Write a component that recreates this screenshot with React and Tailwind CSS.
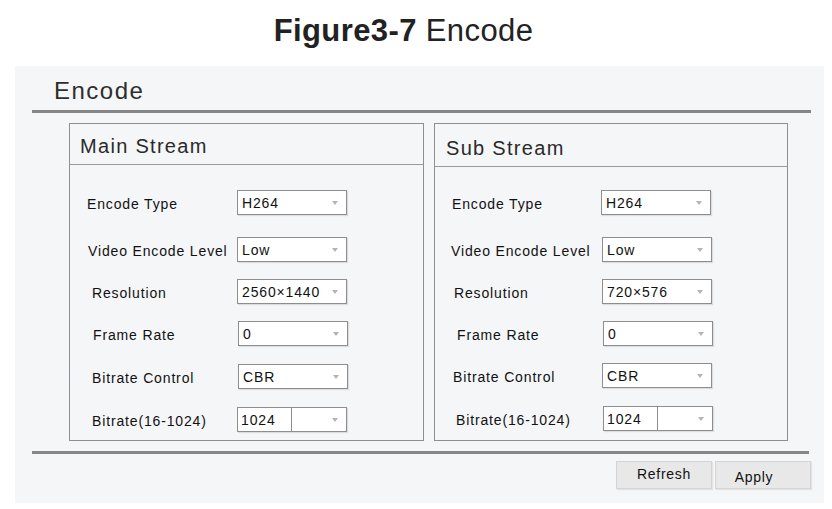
const mainRows = [
  { label: 'Encode Type', value: 'H264', mt: 'mt-[25px]', lbl: 'pl-[17px] w-[167px]' },
  { label: 'Video Encode Level', value: 'Low', mt: 'mt-[22px]', lbl: 'pl-[18px] w-[167px]' },
  { label: 'Resolution', value: '2560×1440', mt: 'mt-[17px]', lbl: 'pl-[22px] w-[167px]' },
  { label: 'Frame Rate', value: '0', mt: 'mt-[17px]', lbl: 'pl-[23px] w-[168px]' },
  { label: 'Bitrate Control', value: 'CBR', mt: 'mt-[18px]', lbl: 'pl-[22px] w-[168px]' },
  { label: 'Bitrate(16-1024)', value: '1024', mt: 'mt-[18px]', lbl: 'pl-[22px] w-[167px]', split: true },
]

const subRows = [
  { label: 'Encode Type', value: 'H264', mt: 'mt-[23px]', lbl: 'pl-[17px] w-[166px]' },
  { label: 'Video Encode Level', value: 'Low', mt: 'mt-[22px]', lbl: 'pl-[16px] w-[167px]' },
  { label: 'Resolution', value: '720×576', mt: 'mt-[17px]', lbl: 'pl-[19px] w-[167px]' },
  { label: 'Frame Rate', value: '0', mt: 'mt-[17px]', lbl: 'pl-[22px] w-[168px]' },
  { label: 'Bitrate Control', value: 'CBR', mt: 'mt-[17px]', lbl: 'pl-[18px] w-[167px]' },
  { label: 'Bitrate(16-1024)', value: '1024', mt: 'mt-[18px]', lbl: 'pl-[21px] w-[168px]', split: true },
]

function Arrow() {
  return (
    <svg width="6" height="4" viewBox="0 0 6 4" className="shrink-0">
      <polygon points="0,0 6,0 3,4" fill="#b4b4b4" />
    </svg>
  )
}

function Select({ value, split }) {
  if (split) {
    return (
      <div className="flex h-[25px] w-[110px] bg-white border border-[#8e8e8e] shadow-[1px_1px_1px_rgba(0,0,0,0.1)]">
        <div className="w-[54px] border-r border-[#8e8e8e] pl-[3px] flex items-center">{value}</div>
        <div className="flex-1 flex items-center justify-end pr-[8px]">
          <Arrow />
        </div>
      </div>
    )
  }
  return (
    <div className="flex items-center justify-between h-[25px] w-[110px] bg-white border border-[#8e8e8e] pl-[4px] pr-[8px] shadow-[1px_1px_1px_rgba(0,0,0,0.1)]">
      <span>{value}</span>
      <Arrow />
    </div>
  )
}

function StreamBox({ title, rows, header, titlePad }) {
  return (
    <div className="h-[318px] border border-[#8f8f8f] flex flex-col">
      <div className={`${header} ${titlePad} border-b border-[#9a9a9a] text-[20px] leading-[24px] tracking-[1.3px] text-[#2a2a2a]`}>
        {title}
      </div>
      <div className="flex flex-col text-[14px] leading-[18px] tracking-[0.85px] text-[#111]">
        {rows.map((r) => (
          <div key={r.label} className={`flex items-center ${r.mt}`}>
            <span className={`${r.lbl} shrink-0 translate-y-[1px]`}>{r.label}</span>
            <Select value={r.value} split={r.split} />
          </div>
        ))}
      </div>
    </div>
  )
}

export default function App() {
  return (
    <div className="w-[832px] h-[509px] bg-white overflow-hidden" style={{ fontFamily: '"Liberation Sans", Arial, sans-serif' }}>
      <div className="h-[66px] flex justify-center pr-[25px] pt-[13px]">
        <h1 className="text-[31px] leading-[35px] tracking-[0.4px] text-[#222]">
          <span className="font-bold">Figure3-7</span> Encode
        </h1>
      </div>

      <div className="ml-[15px] w-[809px] h-[437px] bg-[#f5f6f8] pt-[11px]">
        <div className="pl-[39px] text-[24px] leading-[28px] tracking-[1.5px] text-[#2e2e2e]">Encode</div>
        <div className="ml-[17px] mt-[5px] w-[779px] h-[3px] bg-[#868686]" />

        <div className="flex mt-[10px] ml-[54px] gap-[10px]">
          <div className="w-[355px]">
            <StreamBox title="Main Stream" rows={mainRows} header="h-[41px]" titlePad="pl-[10px] pt-[10px]" />
          </div>
          <div className="w-[354px]">
            <StreamBox title="Sub Stream" rows={subRows} header="h-[43px]" titlePad="pl-[11px] pt-[12px]" />
          </div>
        </div>

        <div className="ml-[17px] mt-[10px] w-[777px] h-[3px] bg-[#868686]" />

        <div className="flex justify-end gap-[3px] pr-[13px] mt-[7px] text-[14px] tracking-[0.7px] text-[#111]">
          <button className="w-[96px] h-[28px] bg-[#e8e8e8] border border-[#d4d4d4] shadow-[1px_1px_1px_rgba(0,0,0,0.08)] flex items-center justify-center pb-[1px]">
            Refresh
          </button>
          <button className="w-[96px] h-[28px] bg-[#e8e8e8] border border-[#d4d4d4] shadow-[1px_1px_1px_rgba(0,0,0,0.08)] flex items-center justify-center pt-[4px] pr-[18px]">
            Apply
          </button>
        </div>
      </div>
    </div>
  )
}
